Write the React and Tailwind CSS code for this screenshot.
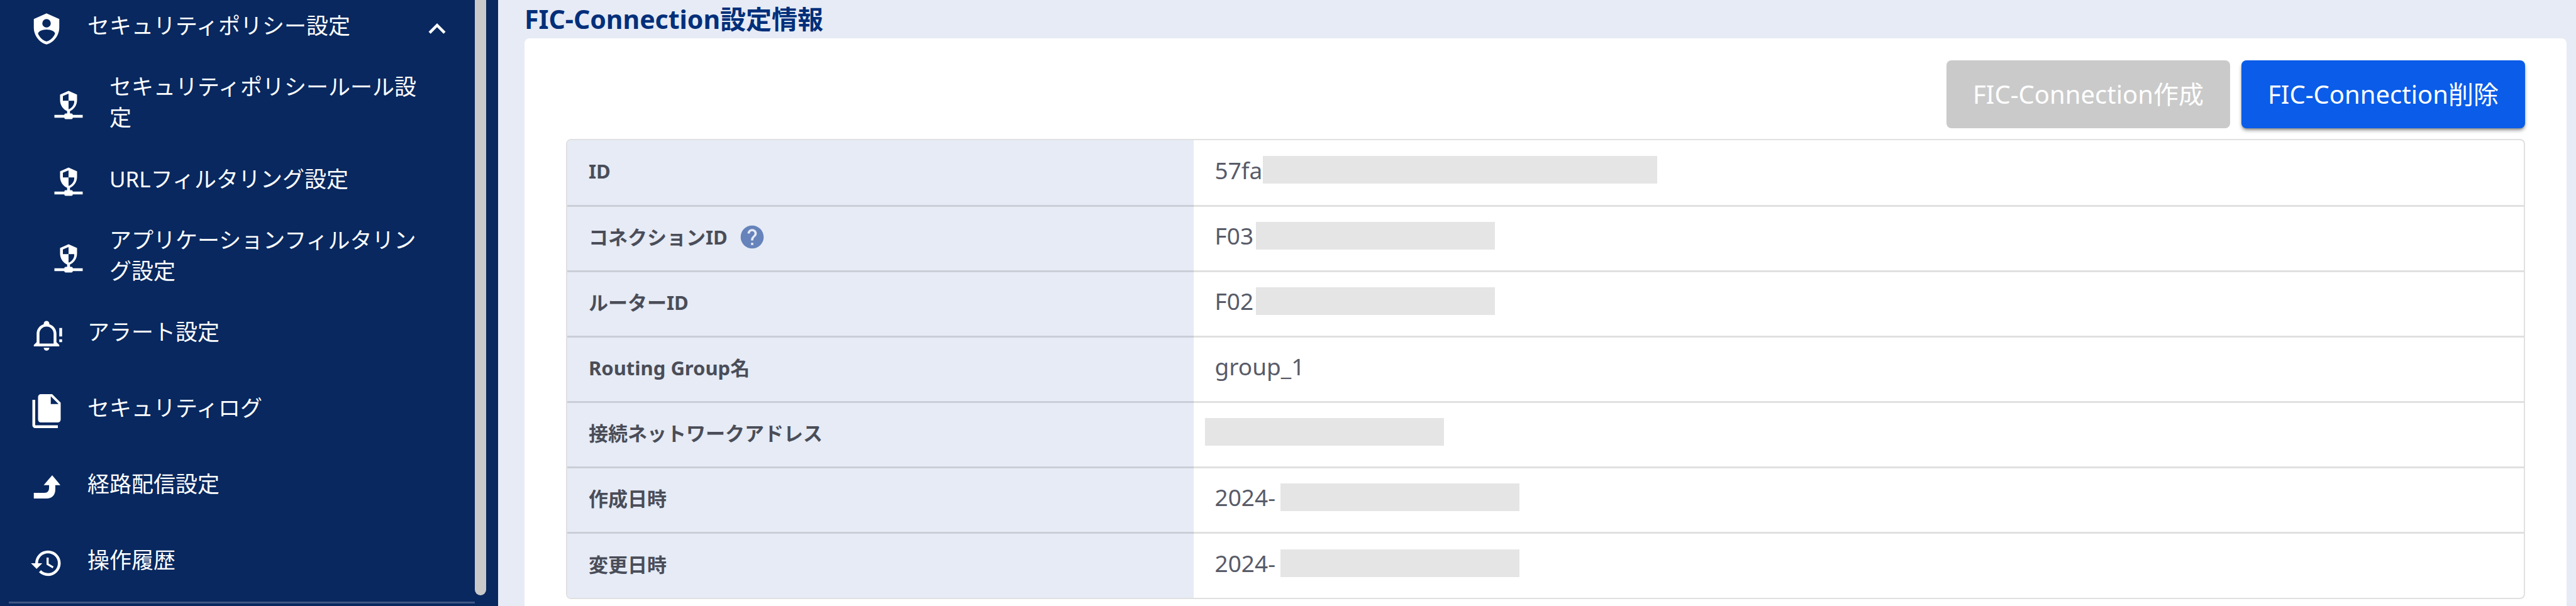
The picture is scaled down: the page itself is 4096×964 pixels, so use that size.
import React from 'react'

const icons = {
  shieldAccount:
    'M12,1L3,5V11C3,16.55 6.84,21.74 12,23C17.16,21.74 21,16.55 21,11V5L12,1M12,5A3,3 0 0,1 15,8A3,3 0 0,1 12,11A3,3 0 0,1 9,8A3,3 0 0,1 12,5M17.13,17C15.92,18.85 14.11,20.24 12,20.92C9.89,20.24 8.08,18.85 6.87,17C6.53,16.5 6.24,16 6,15.47C6,13.82 8.71,12.47 12,12.47C15.29,12.47 18,13.79 18,15.47C17.76,16 17.47,16.5 17.13,17Z',
  securityNetwork:
    'M13,18H14A1,1 0 0,1 15,19H22V21H15A1,1 0 0,1 14,22H10A1,1 0 0,1 9,21H2V19H9A1,1 0 0,1 10,18H11V16.34C8.07,15.13 6,12 6,8.67V4.67L12,2L18,4.67V8.67C18,12 15.93,15.13 13,16.34V18M12,4L8,5.69V9H12V4M12,9V15C13.91,14.53 16,12.06 16,10V9H12Z',
  bellAlert:
    'M10,21H14C14,22.1 13.1,23 12,23S10,22.1 10,21M21,19V20H3V19L5,17V11C5,7.9 7,5.2 10,4.3V4C10,2.9 10.9,2 12,2S14,2.9 14,4V4.3C17,5.2 19,7.9 19,11V17L21,19M17,11C17,8.2 14.8,6 12,6S7,8.2 7,11V18H17V11M21,7H23V13H21V7M21,15H23V17H21V15Z',
  files:
    'M15,7H20.5L15,1.5V7M8,0H16L22,6V18A2,2 0 0,1 20,20H8C6.89,20 6,19.1 6,18V2A2,2 0 0,1 8,0M4,4V22H20V24H4A2,2 0 0,1 2,22V4H4Z',
  arrowUp:
    'M16,3.5L10,10.5H13.8V12C13.8,14.8 12.8,16 10.5,16H3V20H12C16,20 18.2,17.4 18.2,13.5V10.5H21.8L16,3.5Z',
  history:
    'M13.5,8H12V13L16.28,15.54L17,14.33L13.5,12.25V8M13,3A9,9 0 0,0 4,12H1L4.96,16.03L9,12H6A7,7 0 0,1 13,5A7,7 0 0,1 20,12A7,7 0 0,1 13,19C11.07,19 9.32,18.21 8.06,16.94L6.64,18.36C8.27,20 10.5,21 13,21A9,9 0 0,0 22,12A9,9 0 0,0 13,3',
  chevronUp: 'M7.41,15.41L12,10.83L16.59,15.41L18,14L12,8L6,14L7.41,15.41Z',
  help: 'M15.07,11.25L14.17,12.17C13.45,12.89 13,13.5 13,15H11V14.5C11,13.39 11.45,12.39 12.17,11.67L13.41,10.41C13.78,10.05 14,9.55 14,9C14,7.89 13.1,7 12,7A2,2 0 0,0 10,9H8A4,4 0 0,1 12,5A4,4 0 0,1 16,9C16,9.88 15.64,10.67 15.07,11.25M13,19H11V17H13M12,2A10,10 0 0,0 2,12A10,10 0 0,0 12,22A10,10 0 0,0 22,12C22,6.47 17.5,2 12,2Z',
}

function Icon({ name, className }) {
  return (
    <svg viewBox="0 0 24 24" fill="currentColor" aria-hidden="true" className={className}>
      <path fillRule="evenodd" d={icons[name]} />
    </svg>
  )
}

const menu = [
  { icon: 'shieldAccount', label: 'セキュリティポリシー設定', open: true },
  { icon: 'securityNetwork', label: 'セキュリティポリシールール設定', sub: true },
  { icon: 'securityNetwork', label: 'URLフィルタリング設定', sub: true },
  { icon: 'securityNetwork', label: 'アプリケーションフィルタリング設定', sub: true },
  { icon: 'bellAlert', label: 'アラート設定' },
  { icon: 'files', label: 'セキュリティログ' },
  { icon: 'arrowUp', label: '経路配信設定' },
  { icon: 'history', label: '操作履歴' },
]

// mask: classes of the bar that hides the rest of the value
const rows = [
  { label: 'ID', value: '57fa', mask: 'w-[627px] ml-px' },
  { label: 'コネクションID', value: 'F03', mask: 'w-[380px] ml-1', help: true },
  { label: 'ルーターID', value: 'F02', mask: 'w-[380px] ml-1' },
  { label: 'Routing Group名', value: 'group_1' },
  { label: '接続ネットワークアドレス', value: '', mask: 'w-[380px] -ml-4' },
  { label: '作成日時', value: '2024-', mask: 'w-[380px] ml-2' },
  { label: '変更日時', value: '2024-', mask: 'w-[380px] ml-2' },
]

function MenuItem({ item }) {
  const box = item.sub ? 'h-[122px] pl-[82px] pr-[78px]' : 'h-[121px] pl-[47px] pr-[33px]'
  return (
    <li>
      <a href="#" className={`flex items-center gap-[38px] text-[35px] leading-[49px] ${box}`}>
        <Icon name={item.icon} className="mt-[10px] size-[54px] shrink-0" />
        <span className="flex-1">{item.label}</span>
        {item.open && <Icon name="chevronUp" className="mt-[10px] size-[54px] shrink-0" />}
      </a>
    </li>
  )
}

function Sidebar() {
  return (
    <aside className="w-[792px] shrink-0 bg-[#08285f] text-white">
      <div className="-mt-5 flex">
        <nav className="flex-1">
          <ul>
            {menu.map((item) => (
              <MenuItem key={item.label} item={item} />
            ))}
          </ul>
        </nav>
        <div className="mr-[19px] mb-1 w-[18px] rounded-b-full bg-[#c9c9c9]" />
      </div>
      <hr className="mt-[6px] mr-[37px] ml-[14px] border-t-3 border-[#3f5684]" />
    </aside>
  )
}

function InfoTable() {
  return (
    <div className="overflow-hidden rounded-lg border-2 border-[#e0e0e0]">
      <table className="w-full border-collapse text-left">
        <tbody>
          {rows.map((row) => (
            <tr key={row.label} className="h-[104px] border-b-3 border-black/12 last:border-b-0">
              <th scope="row" className="w-[32%] bg-[#e6ebf5] px-[34px] pb-1 text-[31px] font-bold text-[#4a4d58]">
                <div className="flex items-center gap-[17px]">
                  {row.label}
                  {row.help && (
                    <button type="button" aria-label="ヘルプ" className="text-[#6683bb]">
                      <Icon name="help" className="size-[44px]" />
                    </button>
                  )}
                </div>
              </th>
              <td className="px-[34px] pb-2 text-[37px] text-[#585b68]">
                <div className="flex items-center">
                  {row.value}
                  {row.mask && <span className={`h-[44px] bg-[#e5e5e5] ${row.mask}`} />}
                </div>
              </td>
            </tr>
          ))}
        </tbody>
      </table>
    </div>
  )
}

export default function App() {
  return (
    <div className="flex h-screen overflow-hidden bg-[#e6ebf5] font-['Noto_Sans','Noto_Sans_CJK_JP',sans-serif]">
      <Sidebar />
      <main className="flex flex-1 flex-col pr-[15px] pl-[42px]">
        <h2 className="text-[41px] leading-[61px] font-bold text-[#002f7a]">FIC-Connection設定情報</h2>
        <section className="flex-1 rounded-t-lg bg-white px-[66px] pt-[35px]">
          <div className="mb-[17px] flex justify-end gap-[18px] text-[40px] text-white">
            <button type="button" disabled className="h-[108px] w-[451px] rounded-lg bg-[#cacaca]">
              FIC-Connection作成
            </button>
            <button type="button" className="h-[108px] w-[451px] rounded-lg bg-[#0a5ce9] shadow-md shadow-black/40">
              FIC-Connection削除
            </button>
          </div>
          <InfoTable />
        </section>
      </main>
    </div>
  )
}
